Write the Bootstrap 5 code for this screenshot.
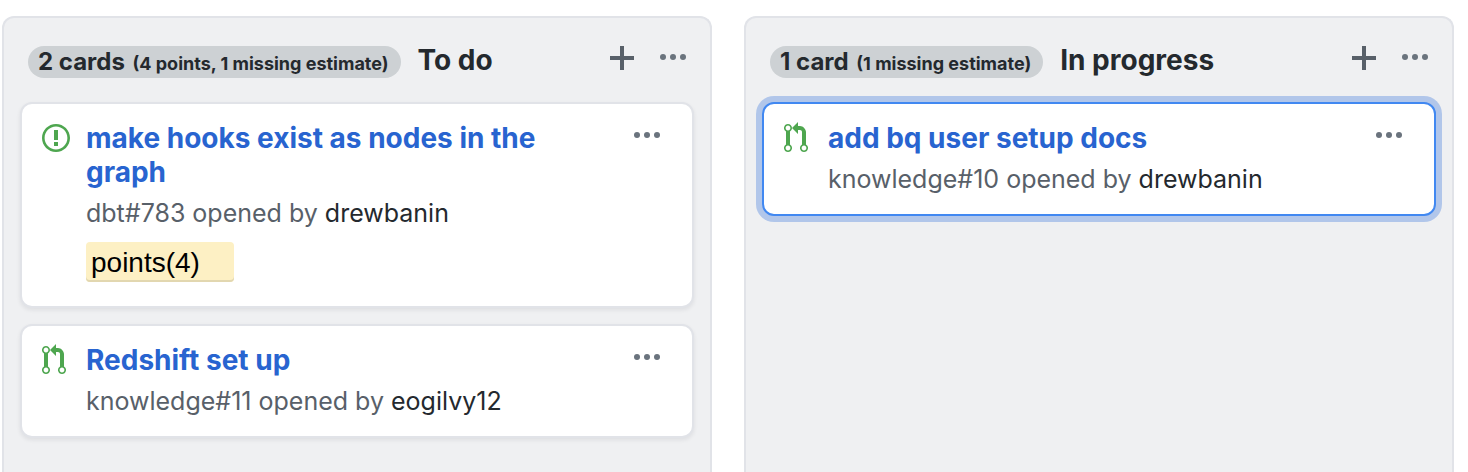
<!DOCTYPE html>
<html lang="en">
<head>
<meta charset="utf-8">
<meta name="viewport" content="width=device-width, initial-scale=1">
<title>Project board</title>
<link href="https://cdn.jsdelivr.net/npm/bootstrap@5.3.0/dist/css/bootstrap.min.css" rel="stylesheet">
<style>
body { font-family: Inter, "Liberation Sans", sans-serif; color: #24292e; background: #fff; }
.board { gap: 32px; padding: 16px 14px 0 2px; min-height: 100vh; }
.board-column { flex: 1 1 0; min-width: 0; background: #eff0f2; border: 2px solid #e1e3e8; border-bottom: 0; border-radius: 12px 12px 0 0; padding: 0 16px 16px; }
.column-head { height: 84px; padding: 4px 8px 0; }
.counter { height: 32px; border-radius: 16px; background: #cdd1d4; padding: 0 12px 0 10px; font-size: 24px; line-height: 32px; font-weight: 700; }
.counter small { font-size: 18px; margin-left: 2px; }
.column-title { font-size: 28px; line-height: 32px; font-weight: 700; padding: 0 0 4px 17px; }
.icon-btn { border: 0; padding: 0; background: none; color: #6a737d; line-height: 1; }
.icon-btn svg, .state svg { display: block; fill: currentColor; }
.add-btn { color: #586069; }
.head-tools { gap: 26px; margin-bottom: 8px; }
.task { border: 2px solid #e1e3e8; border-radius: 12px; padding: 16px 32px 16px 20px; box-shadow: 0 2px 4px rgba(27,31,35,.08); }
.task.selected { border-color: #4188f1; box-shadow: 0 0 0 6px #b1c6ea; }
.state { width: 44px; color: #4ea64f; padding-top: 2px; }
.task-title { font-size: 28px; line-height: 34px; font-weight: 700; margin: 0; padding-top: 1px; }
.task-title a { color: #2864d0; text-decoration: none; }
.task-meta { font-size: 25px; line-height: 34px; color: #586069; margin: 7px 0 0; padding-bottom: 2px; }
.task-meta a { color: #24292e; text-decoration: none; }
.points { width: 148px; height: 40px; margin: 10px 0 8px; padding: 0 5px; border-radius: 4px; background: #fdf0c4; box-shadow: inset 0 -2px 0 #e2d7b0; color: #000; font: 28px/42px "Liberation Sans", Arial, sans-serif; }
</style>
</head>
<body>
<svg class="d-none" aria-hidden="true">
  <symbol id="plus" viewBox="0 0 12 16"><path d="M12 9H7v5H5V9H0V7h5V2h2v5h5v2z"/></symbol>
  <symbol id="dots" viewBox="0 0 13 16"><circle cx="1.5" cy="7.5" r="1.5"/><circle cx="6.5" cy="7.5" r="1.5"/><circle cx="11.5" cy="7.5" r="1.5"/></symbol>
  <symbol id="issue" viewBox="0 0 14 16"><path d="M7 2.3c3.14 0 5.7 2.56 5.7 5.7s-2.56 5.7-5.7 5.7A5.71 5.71 0 0 1 1.3 8c0-3.14 2.56-5.7 5.7-5.7zM7 1C3.14 1 0 4.14 0 8s3.14 7 7 7 7-3.14 7-7-3.14-7-7-7zm1 3H6v5h2V4zm0 6H6v2h2v-2z"/></symbol>
  <symbol id="pull" viewBox="0 0 12 16"><path d="M11 11.28V5c-.03-.78-.34-1.47-.94-2.06C9.46 2.35 8.78 2.03 8 2H7V0L4 3l3 3V4h1c.27.02.48.11.69.31.21.2.3.42.31.69v6.28A1.993 1.993 0 0 0 10 15a1.993 1.993 0 0 0 1-3.72zm-1 2.92c-.66 0-1.2-.55-1.2-1.2 0-.65.55-1.2 1.2-1.2.65 0 1.2.55 1.2 1.2 0 .65-.55 1.2-1.2 1.2zM4 3c0-1.11-.89-2-2-2a1.993 1.993 0 0 0-1 3.72v6.56A1.993 1.993 0 0 0 2 15a1.993 1.993 0 0 0 1-3.72V4.72c.59-.34 1-.98 1-1.72zm-.8 10c0 .66-.55 1.2-1.2 1.2-.65 0-1.2-.55-1.2-1.2 0-.65.55-1.2 1.2-1.2.65 0 1.2.55 1.2 1.2zM2 4.2C1.34 4.2.8 3.65.8 3c0-.65.55-1.2 1.2-1.2.65 0 1.2.55 1.2 1.2 0 .65-.55 1.2-1.2 1.2z"/></symbol>
</svg>
<main class="board d-flex align-items-stretch">
  <section class="board-column">
    <header class="column-head d-flex align-items-center">
      <span class="counter text-nowrap">2 cards <small>(4 points, 1 missing estimate)</small></span>
      <h2 class="column-title mb-0 text-nowrap">To do</h2>
      <div class="head-tools d-flex ms-auto">
        <button type="button" class="icon-btn add-btn" aria-label="Add a card"><svg width="24" height="32"><use href="#plus"/></svg></button>
        <button type="button" class="icon-btn" aria-label="Column menu"><svg width="26" height="32"><use href="#dots"/></svg></button>
      </div>
    </header>
    <div class="d-flex flex-column gap-3">
      <article class="task bg-white d-flex align-items-start">
        <span class="state flex-shrink-0"><svg width="28" height="32"><use href="#issue"/></svg></span>
        <div class="flex-grow-1 pe-5">
          <h3 class="task-title"><a href="#">make hooks exist as nodes in the graph</a></h3>
          <p class="task-meta">dbt#783 opened by <a href="#">drewbanin</a></p>
          <div class="points">points(4)</div>
        </div>
        <button type="button" class="icon-btn" aria-label="Card menu"><svg width="26" height="32"><use href="#dots"/></svg></button>
      </article>
      <article class="task bg-white d-flex align-items-start">
        <span class="state flex-shrink-0"><svg width="24" height="32"><use href="#pull"/></svg></span>
        <div class="flex-grow-1 pe-5">
          <h3 class="task-title"><a href="#">Redshift set up</a></h3>
          <p class="task-meta">knowledge#11 opened by <a href="#">eogilvy12</a></p>
        </div>
        <button type="button" class="icon-btn" aria-label="Card menu"><svg width="26" height="32"><use href="#dots"/></svg></button>
      </article>
    </div>
  </section>
  <section class="board-column">
    <header class="column-head d-flex align-items-center">
      <span class="counter text-nowrap">1 card <small>(1 missing estimate)</small></span>
      <h2 class="column-title mb-0 text-nowrap">In progress</h2>
      <div class="head-tools d-flex ms-auto">
        <button type="button" class="icon-btn add-btn" aria-label="Add a card"><svg width="24" height="32"><use href="#plus"/></svg></button>
        <button type="button" class="icon-btn" aria-label="Column menu"><svg width="26" height="32"><use href="#dots"/></svg></button>
      </div>
    </header>
    <article class="task selected bg-white d-flex align-items-start">
      <span class="state flex-shrink-0"><svg width="24" height="32"><use href="#pull"/></svg></span>
      <div class="flex-grow-1 pe-5">
        <h3 class="task-title"><a href="#">add bq user setup docs</a></h3>
        <p class="task-meta">knowledge#10 opened by <a href="#">drewbanin</a></p>
      </div>
      <button type="button" class="icon-btn" aria-label="Card menu"><svg width="26" height="32"><use href="#dots"/></svg></button>
    </article>
  </section>
</main>
<script src="https://cdn.jsdelivr.net/npm/bootstrap@5.3.0/dist/js/bootstrap.bundle.min.js"></script>
</body>
</html>
